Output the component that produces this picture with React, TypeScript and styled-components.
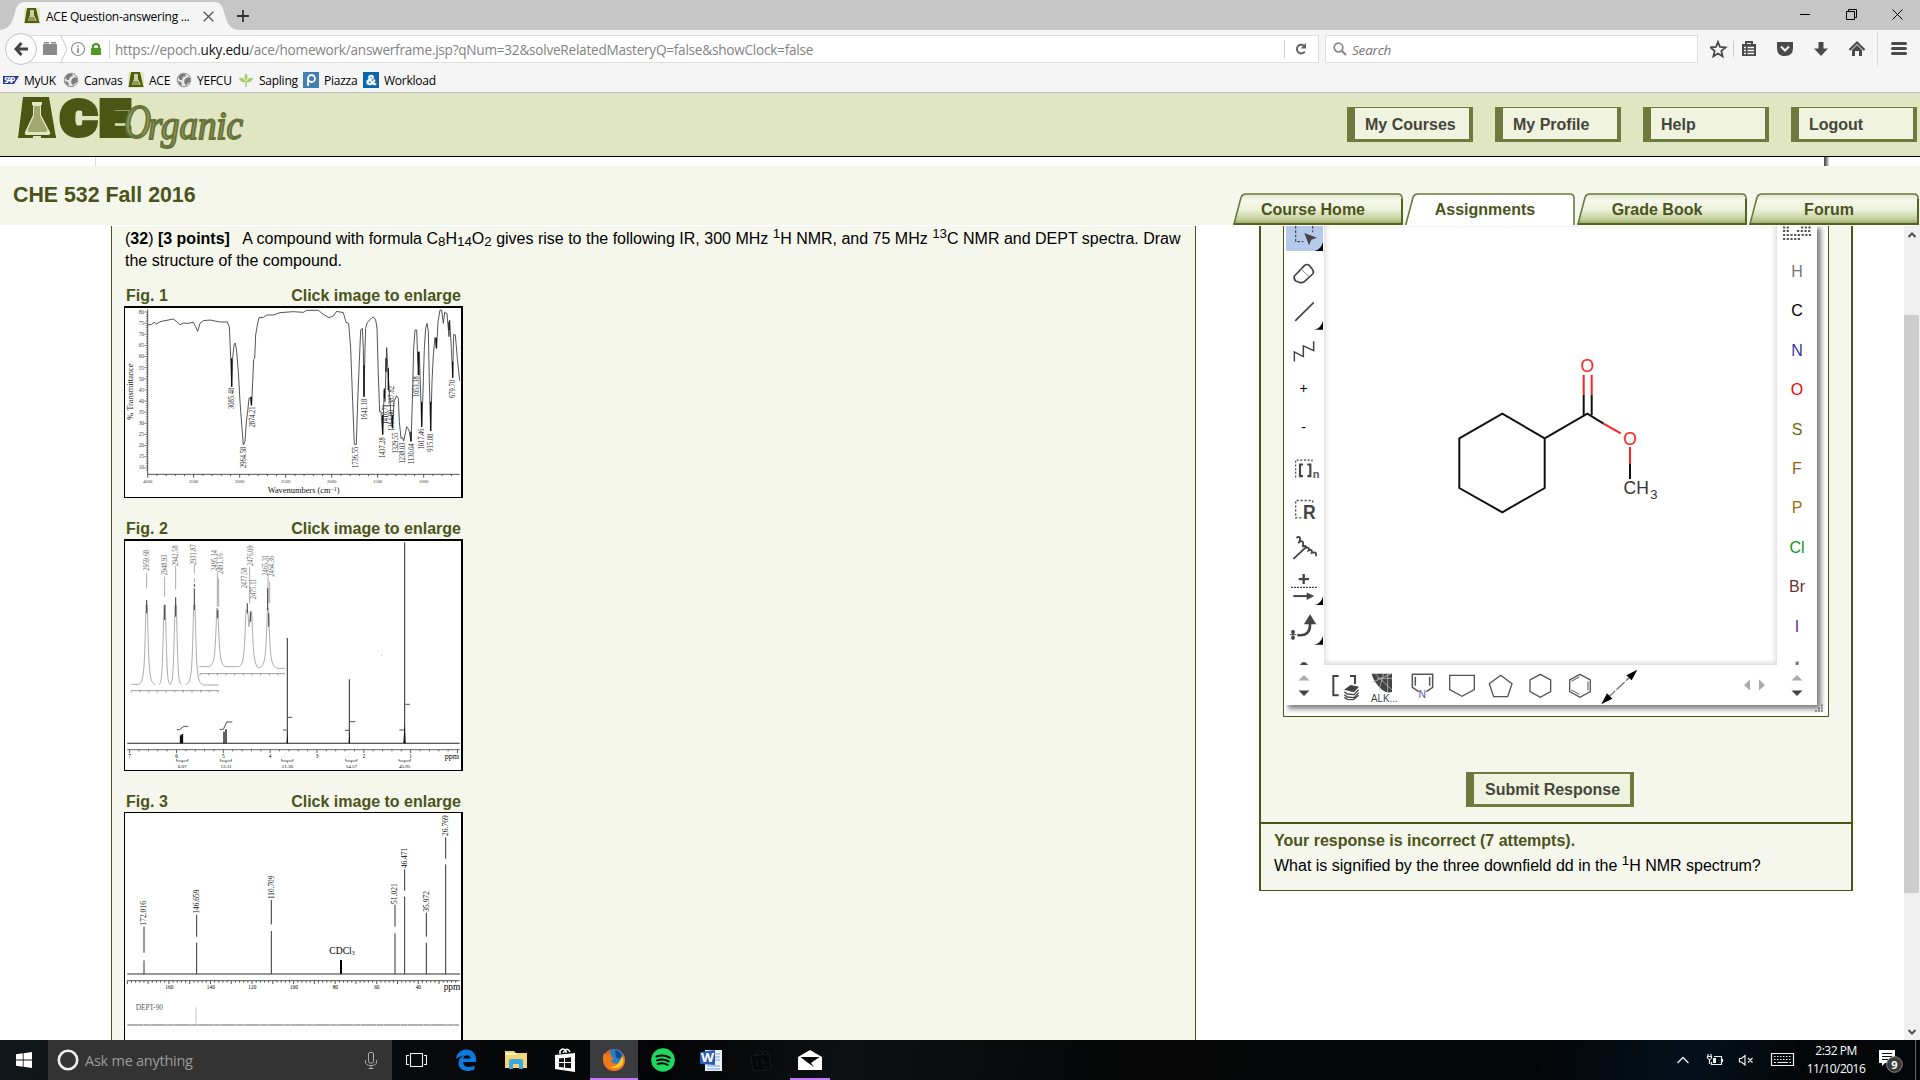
import React from 'react';
import styled, { createGlobalStyle, css } from 'styled-components';

const GlobalStyle = createGlobalStyle`
  html, body { margin: 0; padding: 0; overflow: hidden; background: #fff; }
  * { box-sizing: border-box; }
  svg { display: block; flex: none; }
`;

const olive = '#4a541b';
const pale = '#f5f7ec';
const uiFont = `'Open Sans', 'Noto Sans', sans-serif`;

const Screen = styled.div`
  width: 1920px;
  height: 1080px;
  display: flex;
  flex-direction: column;
  overflow: hidden;
  background: #fff;
  color: #000;
  font-family: 'Liberation Sans', Arial, sans-serif;
  font-size: 16px;
`;

/* ---------- browser chrome ---------- */
const TitleBar = styled.div`
  height: 30px;
  flex: none;
  background: #c6c6c6;
  display: flex;
  align-items: stretch;
  font-family: ${uiFont};
`;
const BrowserTab = styled.div`
  width: 237px;
  height: 30px;
  display: grid;
  > * { grid-area: 1 / 1; }
`;
const TabLabel = styled.div`
  display: flex;
  align-items: center;
  padding: 2px 0 0 24px;
  font-size: 12px;
  white-space: nowrap;
  span { width: 150px; margin-left: 6px; letter-spacing: -0.25px; }
  svg:last-child { margin-left: 7px; }
`;
const NewTab = styled.div`
  flex: 1;
  display: flex;
  align-items: center;
  padding-top: 2px;
`;
const WindowButtons = styled.div`
  display: flex;
  align-items: center;
  gap: 35px;
  padding: 0 17px 2px 0;
`;
const NavBar = styled.div`
  height: 38px;
  flex: none;
  background: #f5f5f5;
  display: flex;
  align-items: center;
  padding-left: 5px;
  font-family: ${uiFont};
`;
const BackButton = styled.div`
  width: 32px;
  height: 32px;
  flex: none;
  border: 1px solid #c3c3c3;
  border-radius: 50%;
  background: #fbfbfb;
  display: flex;
  align-items: center;
  justify-content: center;
  z-index: 1;
`;
const UrlBar = styled.div`
  width: 1289px;
  height: 28px;
  flex: none;
  margin-left: -7px;
  padding-left: 11px;
  border: 1px solid #dedede;
  background: #fff;
  display: flex;
  align-items: center;
`;
const UrlText = styled.div`
  flex: 1;
  margin-left: 5px;
  padding-top: 1px;
  color: #838383;
  font-size: 13.6px;
  letter-spacing: -0.24px;
  white-space: nowrap;
  b { color: #111; font-weight: 400; }
`;
const Divider = styled.div<{ $h: number; $ml?: number; $mr?: number }>`
  width: 1px;
  height: ${p => p.$h}px;
  background: #cfcfcf;
  margin-left: ${p => p.$ml ?? 0}px;
  margin-right: ${p => p.$mr ?? 0}px;
`;
const SearchBox = styled.div`
  width: 373px;
  height: 28px;
  flex: none;
  margin-left: 6px;
  padding-left: 7px;
  border: 1px solid #dedede;
  background: #fff;
  display: flex;
  align-items: center;
  gap: 5px;
  color: #757575;
  font-style: italic;
  font-size: 13.5px;
  letter-spacing: -0.2px;
  span { padding-top: 2px; }
`;
const NavIcons = styled.div`
  flex: 1;
  display: flex;
  align-items: center;
  padding-left: 12px;
`;
const Bookmarks = styled.div`
  height: 25px;
  flex: none;
  background: #f5f5f5;
  border-bottom: 1px solid #bdbdbd;
  display: flex;
  align-items: center;
  padding: 0 0 0 3px;
  font-family: ${uiFont};
  font-size: 12px;
  letter-spacing: -0.25px;
`;
const Bookmark = styled.div<{ $w: number }>`
  width: ${p => p.$w}px;
  display: flex;
  align-items: center;
  gap: 5px;
  white-space: nowrap;
`;

/* ---------- site header ---------- */
const SiteHeader = styled.header`
  height: 64px;
  flex: none;
  background: #dfe6c1;
  border-bottom: 1px solid #000;
  display: flex;
  justify-content: space-between;
  padding-right: 3px;
`;
const HeaderButtons = styled.nav`
  display: flex;
  gap: 22px;
  padding-top: 14px;
`;
const FramedButton = styled.div<{ $w: number; $thick?: boolean }>`
  width: ${p => p.$w}px;
  height: 35px;
  background: #eff3df;
  border: solid #6f793d;
  border-width: ${p => (p.$thick ? '2px 4px 3px 8px' : '1px 4px 3px 8px')};
  padding-left: 10px;
  color: #45463a;
  font-weight: bold;
  line-height: 33px;
  white-space: nowrap;
  ${p => p.$thick && css`line-height: 31px; padding-left: 11px;`}
`;
const FrameGap = styled.div`
  height: 9px;
  flex: none;
  display: flex;
  justify-content: space-between;
  padding: 0 91px 0 95px;
`;
const GapMark = styled.div<{ $dark?: boolean }>`
  width: ${p => (p.$dark ? 5 : 1)}px;
  background: ${p => (p.$dark ? 'linear-gradient(90deg,#555 20%,#aaa 70%,#eee)' : '#ddd')};
`;
const CourseBar = styled.div`
  height: 59px;
  flex: none;
  background: ${pale};
  display: flex;
  justify-content: space-between;
  align-items: flex-end;
  padding: 0 1px 0 13px;
`;
const CourseTitle = styled.h1`
  margin: 0;
  height: 43px;
  font-size: 21.33px;
  line-height: 26px;
  color: ${olive};
`;
const CourseTabs = styled.nav`
  display: flex;
  gap: 2px;
`;
const CourseTab = styled.div`
  width: 170px;
  height: 32px;
  display: grid;
  > * { grid-area: 1 / 1; }
  span {
    z-index: 1;
    padding-right: 10px;
    text-align: center;
    font-weight: bold;
    line-height: 33px;
    color: ${olive};
  }
`;

/* ---------- body ---------- */
const Body = styled.main`
  height: 815px;
  flex: none;
  border-top: 1px solid #fff;
  display: flex;
  overflow: hidden;
`;
const Question = styled.section`
  width: 1085px;
  margin-left: 111px;
  background: ${pale};
  border: solid ${olive};
  border-width: 0 1px;
  padding: 1px 0 0 12px;
`;
const Prompt = styled.p`
  margin: 0;
  padding: 1px 0 0 1px;
  line-height: 22px;
  white-space: nowrap;
  sub, sup { font-size: 13.33px; line-height: 0; }
  sub { vertical-align: -2px; }
`;
const Figure = styled.figure<{ $top: number }>`
  margin: ${p => p.$top}px 0 0;
  width: 339px;
`;
const Caption = styled.figcaption`
  display: flex;
  justify-content: space-between;
  padding: 0 2px;
  font-weight: bold;
  line-height: 22px;
  height: 21px;
  color: ${olive};
`;
const Plate = styled.div<{ $h: number; $top: number }>`
  height: ${p => p.$h}px;
  background: #fff;
  border: solid #000;
  border-width: ${p => p.$top}px 2px 1px 1px;
  overflow: hidden;
`;
const Response = styled.section`
  width: 594px;
  margin-left: 63px;
  height: 665px;
  flex: none;
  background: ${pale};
  border: 2px solid ${olive};
  border-top: 0;
  border-bottom-width: 1px;
  display: flex;
  flex-direction: column;
`;
const AppletFrame = styled.div`
  width: 546px;
  height: 491px;
  margin-left: 22px;
  flex: none;
  border: solid ${olive};
  border-width: 0 1px 1px;
  background: #fff;
  padding-left: 2px;
  display: grid;
  grid-template-columns: 531px 1fr;
`;
const Sketcher = styled.div`
  height: 479px;
  display: grid;
  grid-template: 439px 40px / 38px 453px 40px;
  box-shadow: 3px 3px 5px 1px rgba(0,0,0,.5);
  clip-path: inset(0 -12px -12px 0);
`;
const Grip = styled.div`
  align-self: end;
  justify-self: start;
  margin: 0 0 4px -2px;
`;
const ToolColumn = styled.div`
  display: flex;
  flex-direction: column;
  overflow: hidden;
`;
const Tool = styled.div<{ $active?: boolean }>`
  width: 37px;
  height: ${p => (p.$active ? '25px' : '39.37px')};
  flex: none;
  background: ${p => (p.$active ? '#b5c9eb' : '#fff')};
  display: flex;
  align-items: center;
  justify-content: center;
  font-size: 14px;
  span { margin: -2px 2px 0 0; }
`;
const Canvas = styled.div`
  box-shadow: inset 3px -3px 5px -1px #ddd, inset -3px 0 5px -1px #ddd;
`;
const Elements = styled.div`
  display: flex;
  flex-direction: column;
  align-items: center;
  overflow: hidden;
`;
const ElementButton = styled.div<{ $c: string }>`
  height: 39.4px;
  flex: none;
  line-height: 41px;
  color: ${p => p.$c};
  &:last-child { font-size: 12px; line-height: 42px; }
`;
const PeriodicTool = styled.div`
  height: 25px;
  flex: none;
`;
const Center = styled.div<{ $left?: boolean }>`
  display: flex;
  align-items: center;
  justify-content: center;
  padding: ${p => (p.$left ? '2px 2px 0 0' : '1px 0 0')};
`;
const Templates = styled.div`
  display: flex;
  align-items: center;
  svg:last-child { margin-left: 105px; }
`;
const SubmitRow = styled.div`
  height: 107px;
  flex: none;
  border-bottom: 2px solid ${olive};
  padding: 55px 0 0 205px;
`;
const Feedback = styled.div`
  padding: 5px 0 0 13px;
  line-height: 24px;
  strong { display: block; color: ${olive}; margin-bottom: 1px; }
  sup { font-size: 13.33px; line-height: 0; }
`;
const ScrollTrack = styled.div`
  width: 16px;
  margin-left: auto;
  background: #f0f0f0;
  display: flex;
  flex-direction: column;
  align-items: center;
  padding: 6px 0 5px;
`;
const ScrollThumb = styled.div`
  width: 15px;
  height: 578px;
  background: #cdcdcd;
  margin: 77px 1px auto 0;
`;

/* ---------- taskbar ---------- */
const Taskbar = styled.footer`
  height: 40px;
  flex: none;
  display: flex;
  background: linear-gradient(100deg, #11171a 0%, #0b0e10 12%, #030405 35%, #0d1114 44%, #050505 60%, #04070a 80%, #03101a 88%, #040608 94%);
  color: #fff;
  font-family: ${uiFont};
`;
const TaskItem = styled.div<{ $w: number; $active?: boolean }>`
  width: ${p => p.$w}px;
  height: 40px;
  flex: none;
  display: flex;
  align-items: center;
  justify-content: center;
  background: ${p => (p.$active ? '#3a3c40' : 'transparent')};
`;
const Underlined = styled(TaskItem)`
  border-bottom: 2px solid #c479f5;
  padding-top: 2px;
`;
const Cortana = styled.div`
  width: 344px;
  background: #333;
  display: flex;
  align-items: center;
  padding: 0 15px 0 9px;
  color: #9b9b9b;
  font-size: 14.5px;
  letter-spacing: -0.25px;
  span { flex: 1; padding-left: 6px; }
`;
const Tray = styled.div`
  margin-left: auto;
  display: flex;
  align-items: center;
`;
const Clock = styled.div`
  width: 60px;
  margin: 0 1px 0 10px;
  text-align: center;
  font-size: 12px;
  line-height: 18px;
  letter-spacing: -0.5px;
  white-space: nowrap;
`;
const Peek = styled.div`
  width: 5px;
  height: 40px;
  border-left: 1px solid #666;
`;

/* ---------- small drawings ---------- */
const AceIcon = () => (
  <svg width="16" height="16" viewBox="0 0 16 16">
    <rect width="16" height="16" fill="#e5e9c4" />
    <path d="M3 0h9l3.5 15h-15z" fill="#4f5c14" />
    <path d="M6 2h4v5l3 6H3.5L6 7z" fill="#c9cfa0" />
    <path d="M5.5 9h4.500l2 4H3.700z" fill="#8f9b50" />
  </svg>
);
const Globe = () => (
  <svg width="16" height="16" viewBox="0 0 16 16">
    <circle cx="8" cy="8" r="6.800" fill="#e6e6e6" stroke="#8d8d8d" strokeWidth="1" />
    <path d="M2 5l3-3 4 0 1 2-3 1-1 3-2 0zM9 7l3-2 2 1 0 4-3 2-1 2-2-4zM2 9l3 1 1 4-3-2z" fill="#7c7c7c" />
  </svg>
);

const Logo = () => (
  <svg width="260" height="63" viewBox="0 93 260 63" fontFamily="Roboto, sans-serif">
    <g fill="#4b5614" stroke="#4b5614" strokeWidth="6" strokeLinejoin="miter" fontWeight="900" fontSize="49">
      <text x="22" y="135" textLength="30" lengthAdjust="spacingAndGlyphs">A</text>
      <text x="61" y="135" textLength="35" lengthAdjust="spacingAndGlyphs">C</text>
      <text x="100" y="135" textLength="29" lengthAdjust="spacingAndGlyphs">E</text>
    </g>
    <path d="M23 97h26l7 41H18z" fill="#4b5614" />
    <path d="M32 102h10v3h-1v10l9 17q1 3-2 3H27q-3 0-2-3l8-17v-10h-1z" fill="#dfe6c1" />
    <path d="M34 106h6v10l7 13q1 3-2 3H29q-2-1-1-3l6-13z" fill="#a0a870" />
    <path d="M33 138v-2h8v2z" fill="#dfe6c1" />
    <g fontFamily="'Liberation Serif', serif" fontStyle="italic" fontWeight="400" fill="#8b9658" stroke="#66723a" strokeWidth="1.900">
      <text x="124" y="138" fontSize="48" textLength="27" lengthAdjust="spacingAndGlyphs">O</text>
      <text x="148" y="138.500" fontSize="40" textLength="95" lengthAdjust="spacingAndGlyphs">rganic</text>
    </g>
  </svg>
);

const TabShape = ({ active }: { active?: boolean }) => (
  <svg width="170" height="32" viewBox="0 0 170 32">
    <defs>
      <linearGradient id="tabfill" x1="0" y1="0" x2="0" y2="1">
        <stop offset="0" stopColor="#dfe5c6" />
        <stop offset=".2" stopColor="#f6f8ec" />
        <stop offset=".5" stopColor="#edf1dc" />
        <stop offset=".8" stopColor="#c5cf9c" />
        <stop offset="1" stopColor="#96a35c" />
      </linearGradient>
    </defs>
    <path d="M.5 32L8 4.500Q9 1 13 1H165Q169 1 169 5V32z" fill={active ? '#fff' : 'url(#tabfill)'} />
    <path d="M.7 32L8 4.500Q9 1 13 1H165Q169 1 169 5V32" fill="none" stroke="#6b7740" strokeWidth="1.600" />
    {!active && <path d="M1 31H169V6" fill="none" stroke="#56621f" strokeWidth="2" />}
  </svg>
);

type LabelProps = { x: number; y: number; len: number; t: string; size?: number; fill?: string };
const UpLabel = ({ x, y, len, t, size = 22, fill = '#222' }: LabelProps) => (
  <text transform={`translate(${x} ${y}) rotate(-90)`} fontSize={size} textLength={len} lengthAdjust="spacingAndGlyphs" fill={fill}>{t}</text>
);
const ticks = (from: number, to: number, step: number, make: (v: number, i: number) => string) => {
  let d = '';
  for (let v = from, i = 0; v <= to; v += step, i++) d += make(v, i);
  return d;
};

const irCurve = 'M113 330L125 328 132 322 140 327 150 320 165 317 190 312 200 320 210 329 220 324 235 325 250 322 257 335 263 349 270 325 280 317 300 315 330 321 352 321 358 335 361 400 365 515 368 430 372 390 375 384 379 400 385 470 390 560 396 640 400 690 405 680 409 620 413 590 417 550 421 547 425 572 428 500 431 433 434 430 437 360 442 330 447 308 460 307 470 300 490 300 510 293 550 290 580 292 590 286 625 286 640 298 657 308 670 303 680 289 700 293 708 322 716 325 722 400 728 560 733 688 739 688 743 560 748 440 752 345 757 340 760 400 762 545 765 400 767 340 772 322 785 309 791 306 797 315 801 340 805 480 809 590 813 590 818 660 823 520 825 560 830 398 834 470 838 530 843 600 848 640 852 560 860 542 865 550 868 620 873 670 878 668 881 678 885 660 890 635 897 645 903 680 907 560 911 400 915 345 920 345 923 430 927 480 928 410 932 540 935 635 938 560 943 400 947 340 951 325 955 350 958 500 962 648 966 500 970 420 975 367 980 400 984 320 990 285 995 286 1000 325 1004 292 1011 296 1017 365 1019 315 1024 400 1028 488 1031 358 1036 360 1042 430 1049 497';
const irLabels: [number, number, number, string][] = [
  [373, 582, 64, '3085.48'], [408, 759, 64, '2964.58'], [434, 637, 62, '2874.21'], [743, 759, 64, '1736.55'],
  [770, 615, 64, '1641.18'], [825, 729, 62, '1437.28'], [834, 628, 60, '1416.71'], [851, 648, 64, '1364.90'],
  [853, 577, 64, '1387.82'], [864, 715, 62, '1329.55'], [885, 745, 62, '1238.03'], [911, 747, 62, '1130.04'],
  [928, 546, 62, '1053.38'], [943, 703, 62, '1017.46'], [969, 710, 54, '915.08'], [1036, 549, 54, '679.70'],
];
const IrSpectrum = () => (
  <svg width="336" height="189" viewBox="45 279 1008 567" fontFamily="'Liberation Serif', serif">
    <path d="M113 283V778H1049" fill="none" stroke="#333" strokeWidth="2.500" />
    <path d={ticks(291, 770, 6.68, (v, i) => `M${i % 5 === 0 ? 103 : 108} ${v}H113`)} stroke="#333" strokeWidth="2" />
    <path d={ticks(113, 1049, 27.6, (v, i) => `M${v} 778V${i % 5 === 0 ? 788 : 783}`)} stroke="#333" strokeWidth="2.500" />
    {[80, 75, 70, 65, 60, 55, 50, 45, 40, 35, 30, 25, 20, 15, 10].map((n, i) => (
      <text key={n} x="86" y={297 + i * 33.3} fontSize="16" fill="#444">{n}</text>
    ))}
    {[4000, 3500, 3000, 2500, 2000, 1500, 1000].map((n, i) => (
      <text key={n} x={113 + i * 138} y="804" fontSize="14" textAnchor="middle" fill="#333">{n}</text>
    ))}
    <path d={irCurve} fill="none" stroke="#3a3a3a" strokeWidth="2.600" strokeLinejoin="round" />
    <path d="M365 430V515M424 545V570M762 450V545M818 600V658M823 525V550M835 460V525M847 600V638M925 410V480M935 560V635M962 560V648M1028 440V488M1017 320V345M979 368V400M828 430V470M903 650V678" stroke="#111" strokeWidth="4" />
    {irLabels.map(([x, y, l, t]) => <UpLabel key={t} x={x} y={y} len={l} t={t} />)}
    <UpLabel x={69} y={614} len={168} t="% Transmittance" size={24} fill="#111" />
    <text x="473" y="834" fontSize="24" textLength="216" lengthAdjust="spacingAndGlyphs" fill="#111">Wavenumbers (cm<tspan fontSize="17" dy="-5">−1</tspan><tspan dy="5">)</tspan></text>
  </svg>
);

const peak = (x: number, top: number, base: number, w: number) =>
  `M${x - w} ${base}C${x - 8} ${base - 2} ${x - 7} ${base - 40} ${x - 3} ${top + 40}L${x - 2} ${top}H${x + 2}L${x + 3} ${top + 40}C${x + 7} ${base - 40} ${x + 8} ${base - 2} ${x + w} ${base}`;
const ProtonSpectrum = () => (
  <svg width="336" height="229" viewBox="45 93 1008 687" fontFamily="'Liberation Serif', serif">
    <g fill="none" stroke="#8c8c8c" strokeWidth="2.200">
      <path d={[110, 164, 197, 253].map(x => peak(x, 285, 523, x === 164 || x === 197 ? 17 : 26)).join('') + 'M64 523H84M279 525H327'} />
      <path d={peak(322, 295, 470, 26) + peak(474, 295, 473, 26) + 'M385 470C402 468 403 430 408 300H413L417 350 421 305H425C430 430 432 473 448 473M268 470H296M348 470H385M500 475H526'} />
      <path d={ticks(64, 327, 26, v => `M${v} 542v5`) + ticks(270, 525, 26, v => `M${v} 491v5`) + 'M64 542H327M270 491H525'} stroke="#777" />
    </g>
    <path d="M110 190V235M164 200V260M197 168V238M253 165V190M253 205V218M419 170V280M322 190V290M326 205V290M474 200V280M479 215V280" stroke="#999" strokeWidth="2.500" />
    <path d="M110 270V310M164 285V330M197 262V320M253 235V300M253 222V230M323 300V325M412 280V310M422 305V335M473 235V300M476 310V350" stroke="#444" strokeWidth="3.200" />
    {([[117, 182, '2959.68'], [171, 196, '2948.93'], [204, 168, '2942.58'], [259, 165, '2931.87'], [322, 182, '2495.14'], [338, 192, '2491.16'], [412, 235, '2477.58'], [428, 168, '2476.09'], [437, 268, '2475.11'], [474, 197, '2465.31'], [491, 200, '2464.36']] as [number, number, string][]).map(([x, y, t]) => (
      <UpLabel key={t} x={x} y={y} len={62} t={t} fill="#666" />
    ))}
    <path d="M52 700H1049" stroke="#222" strokeWidth="3.200" />
    <path d="M532 384V700M718 508V700M884 97V700" stroke="#333" strokeWidth="3.200" />
    <path d="M530 700L532 660 534 700zM716 700L718 660 720 700zM880 700L884 640 887 700z" fill="#111" />
    <path d="M212 676V700M217 672V700" stroke="#111" strokeWidth="5" />
    <path d="M342 665V700M348 658V700" stroke="#111" strokeWidth="4" />
    <path d="M200 659H208L222 649H235M329 658H340L350 636H367M519 660H530M534 622H546M705 661H718M718 635H736M868 660H882M886 583H900" fill="none" stroke="#333" strokeWidth="2.500" />
    <path d={'M52 719H1049' + ticks(59, 1049, 28.1, (v, i) => `M${v} 719v${i % 5 === 0 ? 10 : 5}`)} stroke="#444" strokeWidth="2.500" />
    {[7, 6, 5, 4, 3, 2, 1].map((n, i) => <text key={n} x={59 + i * 140.5} y="743" fontSize="16" textAnchor="middle">{n}</text>)}
    {([[217, '6.07'], [348, '13.11'], [532, '21.30'], [724, '14.57'], [884, '45.95']] as [number, string][]).map(([x, t]) => (
      <g key={t}>
        <path d={`M${x - 17} 747v6h34v-6M${x} 753v5`} fill="none" stroke="#333" strokeWidth="2" />
        <text x={x} y="774" fontSize="15" textAnchor="middle">{t}</text>
      </g>
    ))}
    <text x="1004" y="747" fontSize="27" textLength="43" lengthAdjust="spacingAndGlyphs">ppm</text>
    <circle cx="815" cy="436" r="1.500" fill="#999" />
  </svg>
);

const CarbonSpectrum = () => (
  <svg width="336" height="231" viewBox="45 99 1008 693" fontFamily="'Liberation Serif', serif">
    <path d="M102 440V518M102 541V582M260 404V470M260 488V582M484 360V433M484 453V582M855 374V440M855 460V582M884 268V332M884 350V582M949 398V470M949 488V582M1007 172V236M1007 253V582" stroke="#333" strokeWidth="3" />
    <path d="M693 540V582" stroke="#000" strokeWidth="6" />
    <path d="M52 582H1050" stroke="#333" strokeWidth="3.500" />
    <path d={'M52 602H1049' + ticks(52, 1049, 12.47, (v, i) => `M${v} 602v${i % 5 === 0 ? 10 : 6}`)} stroke="#333" strokeWidth="2.500" />
    {[160, 140, 120, 100, 80, 60, 40].map((n, i) => <text key={n} x={178 + i * 124.5} y="627" fontSize="16" textAnchor="middle">{n}</text>)}
    {([[109, 437, 74, '172.016'], [267, 401, 72, '146.659'], [491, 357, 70, '110.709'], [862, 372, 62, '51.021'], [891, 265, 62, '46.471'], [956, 395, 62, '35.972'], [1014, 168, 62, '26.769']] as [number, number, number, string][]).map(([x, y, l, t]) => (
      <UpLabel key={t} x={x} y={y} len={l} t={t} size={23} fill="#111" />
    ))}
    <text x="658" y="521" fontSize="30" textLength="76" lengthAdjust="spacingAndGlyphs">CDCl<tspan fontSize="18" dy="4">3</tspan></text>
    <text x="1001" y="631" fontSize="28" textLength="50" lengthAdjust="spacingAndGlyphs">ppm</text>
    <text x="77" y="690" fontSize="23" textLength="82" lengthAdjust="spacingAndGlyphs" fill="#555">DEPT-90</text>
    <path d="M258 682V730" stroke="#bbb" strokeWidth="2.500" />
    <path d="M52 735H1047" stroke="#666" strokeWidth="3.500" strokeDasharray="48 1 20 1" />
  </svg>
);

const Molecule = () => (
  <svg width="453" height="439" viewBox="1324 226 453 439" fill="none" strokeWidth="2" fontFamily="'Liberation Sans', Arial, sans-serif">
    <path d="M1459.300 438.300L1502.300 413.700 1544.700 438.300V488L1502.300 512.300 1459.300 488zM1544.700 438.300L1587.300 413.700 1603.500 423.600M1583.700 395V415M1591.700 395V415M1630 464V479" stroke="#111" />
    <path d="M1583.700 375V395M1591.700 375V395M1603.500 423.600L1620.700 433.400M1630 447V464" stroke="#f22" />
    <g fontSize="17.500" fill="#f22" textAnchor="middle">
      <text x="1587.300" y="371.500">O</text>
      <text x="1630" y="444.700">O</text>
    </g>
    <text x="1623.500" y="494.300" fontSize="17.500" fill="#333">CH<tspan fontSize="13" dy="5" dx="1.500">3</tspan></text>
  </svg>
);

const corner = (y: number) => <path d={`M189 ${y - 26}V${y}H163Q182 ${y - 3} 189 ${y - 26}z`} fill="#000" />;
const toolDrawings: Record<number, React.ReactNode> = {
  0: <g fill="none" stroke="#444" strokeWidth="5" strokeLinejoin="round"><path d="M103 183L134 151Q141 146 148 151L158 164Q163 171 158 177L133 200Q126 204 118 202L107 198Q100 191 103 183z" /><path d="M122 161L148 186" strokeWidth="3" stroke="#888" /></g>,
  1: <><path d="M107 317L160 265" stroke="#444" strokeWidth="5" strokeLinecap="round" />{corner(345)}</>,
  2: <path d="M103 439V410L130 424V392L161 406V378" fill="none" stroke="#444" strokeWidth="4.500" />,
  5: <g transform="translate(0 735)" fill="none" stroke="#444" strokeWidth="4"><path d="M107 52V0H156V4" strokeDasharray="6 5" strokeWidth="3.500" /><path d="M129 13H120V48H129M142 13H151V48H142" strokeWidth="6.500" /><text x="158" y="53" fontSize="32" fill="#555" stroke="none" fontWeight="bold" textLength="20" lengthAdjust="spacingAndGlyphs">n</text></g>,
  6: <g transform="translate(0 735)" fill="none" stroke="#444"><path d="M124 174H107V122H158V130" strokeDasharray="6 6" strokeWidth="4" /><text x="129" y="177" fontSize="62" fontWeight="bold" fill="#444" stroke="none" textLength="38" lengthAdjust="spacingAndGlyphs">R</text></g>,
  7: <g transform="translate(0 735)" fill="none" stroke="#444" strokeWidth="5.500" strokeLinecap="round"><path d="M102 294L138 260" /><path d="M111 231Q121 226 120 236T115 247Q127 238 129 246T127 259Q137 252 139 262Q150 260 146 270Q158 264 155 277Q171 272 168 285" strokeWidth="5.500" /></g>,
  8: <g transform="translate(0 735)"><path d="M131 342V372M116 357H147" stroke="#444" strokeWidth="7" /><path d="M93 382H173" stroke="#444" strokeWidth="4" strokeDasharray="6 3" /><path d="M100 408H142" stroke="#444" strokeWidth="6" /><path d="M140 397L163 408 140 420z" fill="#444" />{corner(435)}</g>,
  9: <g transform="translate(0 735)"><path d="M112 526Q152 532 150 490" fill="none" stroke="#444" strokeWidth="8" /><path d="M150 464L169 494H132z" fill="#444" /><circle cx="99" cy="517" r="6" fill="#444" /><circle cx="99" cy="534" r="6" fill="#444" /><path d="M90 525H109M99 512V540" stroke="#444" strokeWidth="3" />{corner(555)}</g>,
  10: <g transform="translate(0 735)"><path d="M118 616Q131 594 146 616z" fill="#444" /></g>,
};
const ToolIcon = ({ k }: { k: number }) => (
  <svg width="37" height="39.370" viewBox={`78 ${108 + 118.1 * k} 111 118.100`} fontFamily="'Liberation Sans', sans-serif">{toolDrawings[k]}</svg>
);

const templateDrawings: React.ReactNode[] = [
  <g><path d="M236 648H220V706H236M270 648H285V672" fill="none" stroke="#444" strokeWidth="6" /><path d="M252 689L272 675 297 680 282 697z" fill="#444" /><path d="M253 695L262 702 282 704 296 689M253 704L262 711 282 713 296 698M253 712L262 718 280 719 296 706" fill="none" stroke="#444" strokeWidth="4" /></g>,
  <g><path d="M336 641H397V696Q380 700 368 690Q342 668 336 641z" fill="#444" /><path d="M345 640L397 690M372 640L358 690M397 655H352M336 668L397 640M384 641V696" stroke="#bbb" strokeWidth="2.500" /><text x="334" y="727" fontSize="30" fill="#444" textLength="80" lengthAdjust="spacingAndGlyphs">ALK...</text></g>,
  <g fill="none" stroke="#555" strokeWidth="4.500"><path d="M475 695L456 682V643H517V682L498 695M465 650V677M508 650V677" /><text x="486" y="715" fontSize="31" fill="#5550cc" stroke="none" textAnchor="middle">N</text></g>,
  <path d="M569 646H643V689L606 709 569 689z" fill="none" stroke="#555" strokeWidth="4" />,
  <path d="M723 646L757 671 744 710H702L689 671z" fill="none" stroke="#555" strokeWidth="4" />,
  <path d="M840 643L871 660V695L840 712 809 695V660z" fill="none" stroke="#555" strokeWidth="4" />,
  <g fill="none" stroke="#555" strokeWidth="4"><path d="M960 643L991 660V695L960 712 929 695V660z" /><path d="M984 664V691M958 651L934 664M934 690L958 703" strokeWidth="3" /></g>,
  <g><path d="M1042 716L1117 645" stroke="#777" strokeWidth="4" strokeDasharray="34 5" /><path d="M1025 733L1042 700 1058 716zM1133 629L1100 646 1116 661z" fill="#000" /></g>,
];

const Spinner = () => (
  <svg width="12" height="22" viewBox="0 0 12 22"><path d="M6 0L11.500 5.500H.500z" fill="#aaa" /><path d="M.500 15.500H11.500L6 21z" fill="#444" /></svg>
);

const elements: [string, string][] = [
  ['H', '#777'], ['C', '#000'], ['N', '#3338a5'], ['O', '#f00'], ['S', '#6b6b10'], ['F', '#946414'], ['P', '#a07010'], ['Cl', '#0a9a1a'], ['Br', '#6b3030'], ['I', '#7025a0'], ['*', '#333'],
];

export default function App() {
  return (
    <Screen>
      <GlobalStyle />
      <TitleBar>
        <BrowserTab>
          <svg width="238" height="30" viewBox="0 0 238 30"><path d="M0 30Q10 29 13 19L16 9Q18 2 25 2H214Q221 2 223 9L226 19Q229 29 238 30z" fill="#f5f5f5" /></svg>
          <TabLabel>
            <AceIcon /><span>ACE Question-answering ...</span>
            <svg width="11" height="11" viewBox="0 0 11 11"><path d="M.700 .700L10.300 10.300M10.300 .700L.700 10.300" stroke="#555" strokeWidth="1.300" /></svg>
          </TabLabel>
        </BrowserTab>
        <NewTab><svg width="12" height="12" viewBox="0 0 12 12"><path d="M6 0V12M0 6H12" stroke="#333" strokeWidth="1.800" /></svg></NewTab>
        <WindowButtons>
          <svg width="11" height="11" viewBox="0 0 11 11"><path d="M0 5.500H10" stroke="#000" /></svg>
          <svg width="11" height="11" viewBox="0 0 11 11"><path d="M.500 2.500H8.500V10.500H.500zM2.500 2.500V.500H10.500V8.500H8.500" fill="none" stroke="#000" /></svg>
          <svg width="11" height="11" viewBox="0 0 11 11"><path d="M.500 .500L10.500 10.500M10.500 .500L.500 10.500" stroke="#000" /></svg>
        </WindowButtons>
      </TitleBar>
      <NavBar>
        <BackButton><svg width="14" height="14" viewBox="0 0 14 14"><path d="M7.500 1L2 7L7.500 13M2 7H14" fill="none" stroke="#444" strokeWidth="3" /></svg></BackButton>
        <UrlBar>
          <svg width="67" height="28" viewBox="42 35 67 28">
            <path d="M43 44H57V55H43zM44 42H49V43.500H44zM51 42H56V43.500H51z" fill="#8a8a8a" />
            <path d="M60.500 35L67 49L60.500 63" fill="none" stroke="#ccc" />
            <circle cx="78" cy="49" r="6.500" fill="none" stroke="#888" strokeWidth="1.100" />
            <path d="M78 45.500V47M78 48.200V53" stroke="#777" strokeWidth="1.500" />
            <path d="M91 48H101V55H91z" fill="#4a9a22" /><path d="M93 49V46.500Q93 44 96 44T99 46.500V49" fill="none" stroke="#4a9a22" strokeWidth="2.200" />
          </svg>
          <Divider $h={18} />
          <UrlText>https://epoch.<b>uky.edu</b>/ace/homework/answerframe.jsp?qNum=32&amp;solveRelatedMasteryQ=false&amp;showClock=false</UrlText>
          <Divider $h={18} $mr={10} />
          <svg width="12" height="12" viewBox="0 0 12 12"><path d="M9.800 8.500A4.300 4.300 0 1 1 9 2.800" fill="none" stroke="#666" strokeWidth="2" /><path d="M11 0V5.500H5.500z" fill="#666" /></svg>
          <Divider $h={0} $mr={10} />
        </UrlBar>
        <SearchBox>
          <svg width="14" height="14" viewBox="0 0 14 14"><circle cx="5.500" cy="5.500" r="4.300" fill="none" stroke="#888" strokeWidth="1.700" /><path d="M8.500 8.500L13 13" stroke="#888" strokeWidth="2.300" /></svg>
          <span>Search</span>
        </SearchBox>
        <NavIcons>
          <svg width="202" height="34" viewBox="1710 32 202 34">
            <path d="M1718 42l2 5 5.500.400-4.200 3.600 1.300 5.400-4.600-2.900-4.600 2.900 1.300-5.400-4.200-3.600 5.500-.400z" fill="none" stroke="#4a4a4a" strokeWidth="1.800" />
            <path d="M1733.500 41V57" stroke="#ccc" />
            <path d="M1742 44H1756V56H1742z" fill="#4a4a4a" /><path d="M1746 44V42H1752V44" fill="none" stroke="#4a4a4a" strokeWidth="2" /><path d="M1744 47.500H1746M1747.500 47.500H1754M1744 50.500H1746M1747.500 50.500H1754M1744 53.500H1746M1747.500 53.500H1754" stroke="#f5f5f5" strokeWidth="1.400" />
            <path d="M1777 42H1793V48Q1793 56 1785 56T1777 48z" fill="#4a4a4a" /><path d="M1781 46.500L1785 50.500L1789 46.500" fill="none" stroke="#f5f5f5" strokeWidth="2" />
            <path d="M1818.500 42H1823.500V48.500H1828L1821 56L1814 48.500H1818.500z" fill="#4a4a4a" />
            <path d="M1849.500 50L1857 42.500L1864.500 50" fill="none" stroke="#4a4a4a" strokeWidth="2.200" /><path d="M1852 50L1857 45L1862 50V56H1859V51H1855V56H1852z" fill="#4a4a4a" />
            <path d="M1877.500 32V66" stroke="#ddd" />
            <path d="M1892.500 43.500H1905.500M1892.500 48.500H1905.500M1892.500 53.500H1905.500" stroke="#4a4a4a" strokeWidth="3" strokeLinecap="round" />
          </svg>
        </NavIcons>
      </NavBar>
      <Bookmarks>
        <Bookmark $w={60}>
          <svg width="16" height="16" viewBox="0 0 16 16"><path d="M0 4H16L11 12H0z" fill="#25359a" /><text x="1" y="11" fontSize="8" fontWeight="bold" fill="#fff" textLength="11">SAP</text></svg>MyUK
        </Bookmark>
        <Bookmark $w={65}><Globe />Canvas</Bookmark>
        <Bookmark $w={48}><AceIcon />ACE</Bookmark>
        <Bookmark $w={62}><Globe />YEFCU</Bookmark>
        <Bookmark $w={65}><svg width="16" height="16" viewBox="0 0 16 16"><path d="M8 1Q11 5 8 9Q5 5 8 1M1 6Q6 5 7.500 10Q2 11 1 6M15 6Q10 5 8.500 10Q14 11 15 6" fill="#a9cc6a" /><path d="M8 9V15" stroke="#a9cc6a" strokeWidth="1.500" /></svg>Sapling</Bookmark>
        <Bookmark $w={60}><svg width="16" height="16" viewBox="0 0 16 16"><rect width="16" height="16" fill="#4080b5" /><circle cx="8.500" cy="6.500" r="3.500" fill="none" stroke="#fff" strokeWidth="1.800" /><path d="M5 7V14" stroke="#fff" strokeWidth="1.800" /></svg>Piazza</Bookmark>
        <Bookmark $w={80}><svg width="16" height="16" viewBox="0 0 16 16" fontFamily="'Liberation Sans', sans-serif"><rect width="16" height="16" fill="#0b66ad" /><text x="8" y="13" fontSize="14" fontWeight="bold" fill="#fff" stroke="#fff" strokeWidth=".500" textAnchor="middle">&amp;</text></svg>Workload</Bookmark>
      </Bookmarks>

      <SiteHeader>
        <Logo />
        <HeaderButtons>
          {['My Courses', 'My Profile', 'Help', 'Logout'].map(t => <FramedButton key={t} $w={126}>{t}</FramedButton>)}
        </HeaderButtons>
      </SiteHeader>
      <FrameGap><GapMark /><GapMark $dark /></FrameGap>
      <CourseBar>
        <CourseTitle>CHE 532 Fall 2016</CourseTitle>
        <CourseTabs>
          {['Course Home', 'Assignments', 'Grade Book', 'Forum'].map((t, i) => (
            <CourseTab key={t}><TabShape active={i === 1} /><span>{t}</span></CourseTab>
          ))}
        </CourseTabs>
      </CourseBar>

      <Body>
        <Question>
          <Prompt>
            (<b>32</b>) <b>[3 points]</b> &nbsp; A compound with formula C<sub>8</sub>H<sub>14</sub>O<sub>2</sub> gives rise to the following IR, 300 MHz <sup>1</sup>H NMR, and 75 MHz <sup>13</sup>C NMR and DEPT spectra. Draw<br />the structure of the compound.
          </Prompt>
          <Figure $top={13}>
            <Caption><span>Fig. 1</span><span>Click image to enlarge</span></Caption>
            <Plate $h={192} $top={2}><IrSpectrum /></Plate>
          </Figure>
          <Figure $top={20}>
            <Caption><span>Fig. 2</span><span>Click image to enlarge</span></Caption>
            <Plate $h={232} $top={2}><ProtonSpectrum /></Plate>
          </Figure>
          <Figure $top={20}>
            <Caption><span>Fig. 3</span><span>Click image to enlarge</span></Caption>
            <Plate $h={300} $top={1}><CarbonSpectrum /></Plate>
          </Figure>
        </Question>

        <Response>
          <AppletFrame>
            <Sketcher>
              <ToolColumn>
                <Tool $active>
                  <svg width="37" height="25" viewBox="78 33 111 75"><path d="M107 33V80H130M158 33V52" fill="none" stroke="#444" strokeWidth="3.500" strokeDasharray="8 5" /><path d="M133 54L171 68 154 74 147 91z" fill="#444" />{corner(108)}</svg>
                </Tool>
                {[0, 1, 2, 3, 4, 5, 6, 7, 8, 9, 10].map(k => (
                  <Tool key={k}>{k === 3 ? <span>+</span> : k === 4 ? <span>-</span> : <ToolIcon k={k} />}</Tool>
                ))}
              </ToolColumn>
              <Canvas><Molecule /></Canvas>
              <Elements>
                <PeriodicTool>
                  <svg width="28" height="14" viewBox="0 0 28 14"><path d="M0 1.500H6M18 1.500H28M0 5H6M14 5H28M0 9H28M0 13H18" stroke="#555" strokeWidth="2" strokeDasharray="2.200 1.500" /></svg>
                </PeriodicTool>
                {elements.map(([t, c]) => <ElementButton key={t} $c={c}>{t}</ElementButton>)}
              </Elements>
              <Center $left><Spinner /></Center>
              <Templates>
                {templateDrawings.map((d, k) => (
                  <svg key={k} width="39.330" height="40" viewBox={`${192 + 118 * k} 615 118 120`} fontFamily="'Liberation Sans', sans-serif">{d}</svg>
                ))}
                <svg width="21" height="12" viewBox="0 0 21 12"><path d="M6 0.500V11.500L0 6zM15 .500L21 6L15 11.500z" fill="#aaa" /></svg>
              </Templates>
              <Center><Spinner /></Center>
            </Sketcher>
            <Grip><svg width="9" height="8" viewBox="0 0 9 8"><path d="M6 1.500H8M3 4.500H8M0 7H8" stroke="#999" strokeWidth="2" strokeDasharray="2 1" /></svg></Grip>
          </AppletFrame>
          <SubmitRow><FramedButton $w={168} $thick>Submit Response</FramedButton></SubmitRow>
          <Feedback>
            <strong>Your response is incorrect (7 attempts).</strong>
            What is signified by the three downfield dd in the <sup>1</sup>H NMR spectrum?
          </Feedback>
        </Response>

        <ScrollTrack>
          <svg width="8" height="6" viewBox="0 0 8 6"><path d="M.500 5L4 1.500L7.500 5" fill="none" stroke="#505050" strokeWidth="2" /></svg>
          <ScrollThumb />
          <svg width="8" height="6" viewBox="0 0 8 6"><path d="M.500 1L4 4.500L7.500 1" fill="none" stroke="#505050" strokeWidth="2" /></svg>
        </ScrollTrack>
      </Body>

      <Taskbar>
        <TaskItem $w={48}><svg width="16" height="16" viewBox="0 0 16 16"><path d="M0 2.300L6.800 1.300V7.600H0zM7.600 1.200L16 0V7.600H7.600zM0 8.400H6.800V14.700L0 13.700zM7.600 8.400H16V16L7.600 14.800z" fill="#fff" /></svg></TaskItem>
        <Cortana>
          <svg width="22" height="22" viewBox="0 0 22 22"><circle cx="11" cy="11" r="9.200" fill="none" stroke="#eee" strokeWidth="2.600" /></svg>
          <span>Ask me anything</span>
          <svg width="12" height="17" viewBox="0 0 12 17"><rect x="3.500" y=".500" width="5" height="10.500" rx="1.500" fill="none" stroke="#aaa" /><path d="M.500 8V10Q.500 13.500 6 13.500T11.500 10V8M6 13.500V16.500M3.500 16.500H8.500" fill="none" stroke="#aaa" /></svg>
        </Cortana>
        <TaskItem $w={48}><svg width="21" height="14" viewBox="0 0 21 14"><path d="M4.500 .500H16.500V13.500H4.500zM3 2.500H.500V11.500H3M18 2.500H20.500V11.500H18" fill="none" stroke="#eee" strokeWidth="1.100" /></svg></TaskItem>
        <TaskItem $w={52}><svg width="22" height="22" viewBox="0 0 22 22"><path d="M1 10C2 3 6.500 .500 11.500 .500C17.500 .500 21 5 21 10V13H8C8.500 19 15 19 19.500 16.500V20.500C11 24 3 21 3.500 14C3.800 10 6 7.500 9 6.500C5.500 7 2.500 8.500 1 10zM8 9.500H15.500C15.500 5 9 5 8 9.500z" fill="#0a7bdc" /></svg></TaskItem>
        <TaskItem $w={48}><svg width="22" height="20" viewBox="0 0 22 20"><path d="M0 1H9L11 3H22V18H0z" fill="#f3d477" /><path d="M1 3H12V5H1z" fill="#fff3c0" /><path d="M4 19V11Q4 9 6 9H16Q18 9 18 11V19H14V14H8V19z" fill="#3aa8e0" /></svg></TaskItem>
        <TaskItem $w={50}><svg width="22" height="24" viewBox="0 0 22 24"><path d="M1 7L21 5V24L1 21z" fill="#fff" /><path d="M6 6V3Q9 -1 12 3V5M9 5Q13 -2 16 4" fill="none" stroke="#fff" strokeWidth="1.500" /><path d="M5 10.500L10 10V14H5zM11 10L17 9.300V14H11zM5 15H10V19.500L5 19zM11 15H17V20.300L11 19.700z" fill="#111" /></svg></TaskItem>
        <Underlined $w={48} $active>
          <svg width="24" height="24" viewBox="0 0 24 24"><circle cx="12" cy="12" r="11" fill="#e8641b" /><path d="M8 2Q16-1 21 6Q23 14 16 17Q10 17 8 12z" fill="#2a7cc7" /><path d="M13 2Q19 3 20 9Q17 12 14 9z" fill="#174a88" /><path d="M2 5L5 7L9 6L9 9L12 10L9 13Q12 17 17 15Q21 13 21 6Q25 14 20 20Q12 26 4 19Q-1 12 2 5z" fill="#ee7a1d" /><path d="M20 8Q23 14 19 18Q14 22 8 19Q16 20 20 8z" fill="#fbc62d" /></svg>
        </Underlined>
        <TaskItem $w={50}><svg width="24" height="24" viewBox="0 0 24 24"><circle cx="12" cy="12" r="11.800" fill="#1ed760" /><path d="M5.500 8.500Q12.500 6 19 9.800M6 12.400Q12 10.300 17.700 13.400M6.700 16Q12 14.300 16.500 16.800" fill="none" stroke="#050505" strokeWidth="2" strokeLinecap="round" /></svg></TaskItem>
        <TaskItem $w={47}><svg width="23" height="23" viewBox="0 0 23 23"><path d="M5 1H22V22H5z" fill="#e8f0fa" /><path d="M15 5H20M15 8H20M15 11H20M7 17H20M7 20H20" stroke="#7ba3d6" strokeWidth="1.200" /><path d="M0 3L15 1V16L0 15z" fill="#2b5db5" /><text x="1" y="13" fontSize="12" fontWeight="bold" fill="#fff" textLength="13" lengthAdjust="spacingAndGlyphs">W</text></svg></TaskItem>
        <TaskItem $w={52}><svg width="22" height="24" viewBox="0 0 22 24"><path d="M1 8L19 6L21 21L3 23zM6 7Q8 0 13 5M12 6Q16-1 18 6M7 11V19M12 11V15H16M12 19H17" fill="#050607" stroke="#15191b" strokeWidth="1.200" /></svg></TaskItem>
        <Divider $h={0} $ml={2} />
        <Underlined $w={40}><svg width="24" height="20" viewBox="0 0 24 20"><path d="M0 7L12 0L24 7V20H0z" fill="#fff" /><path d="M2.500 7H21.500L13 13L16 17L9.500 12.500z" fill="#050505" /></svg></Underlined>
        <Tray>
          <svg width="120" height="20" viewBox="1676 1050 120 20" fill="none" stroke="#eee">
            <path d="M1677.500 1063L1683 1057.500L1688.500 1063" strokeWidth="1.400" />
            <path d="M1714 1056.500H1721.500V1064.500H1711.500V1062M1722.500 1059V1062M1708 1054V1056M1711 1054V1056M1707.500 1056.500H1711.500V1058Q1709.500 1061 1707.500 1058zM1709.500 1060V1064" strokeWidth="1.200" /><path d="M1713 1058H1716V1063H1713z" fill="#eee" stroke="none" />
            <path d="M1739.500 1058.500H1741.500L1745 1055.500V1065L1741.500 1062H1739.500zM1748 1058L1752.500 1062.500M1752.500 1058L1748 1062.500" strokeWidth="1.200" />
            <path d="M1771.500 1053.500H1793.500V1065.500H1771.500z" strokeWidth="1.200" /><path d="M1774 1056.500H1791M1774 1059.500H1791" strokeDasharray="1.500 1.500" /><path d="M1774 1062.500H1776M1777.500 1062.500H1788M1789.500 1062.500H1791" />
          </svg>
          <Clock>2:32 PM<br />11/10/2016</Clock>
          <Divider $h={0} $ml={10} />
          <svg width="26" height="28" viewBox="0 0 26 28"><path d="M1 4H17V17H7L4 20V17H1z" fill="#fff" /><path d="M4 7.500H14M4 10.500H14M4 13.500H10" stroke="#111" /><circle cx="16.500" cy="18.500" r="7.800" fill="#3a3a3a" stroke="#888" /><text x="16.500" y="22.500" fontSize="11" fontWeight="bold" fill="#fff" textAnchor="middle">9</text></svg>
          <Divider $h={0} $ml={10} />
          <Peek />
        </Tray>
      </Taskbar>
    </Screen>
  );
}
